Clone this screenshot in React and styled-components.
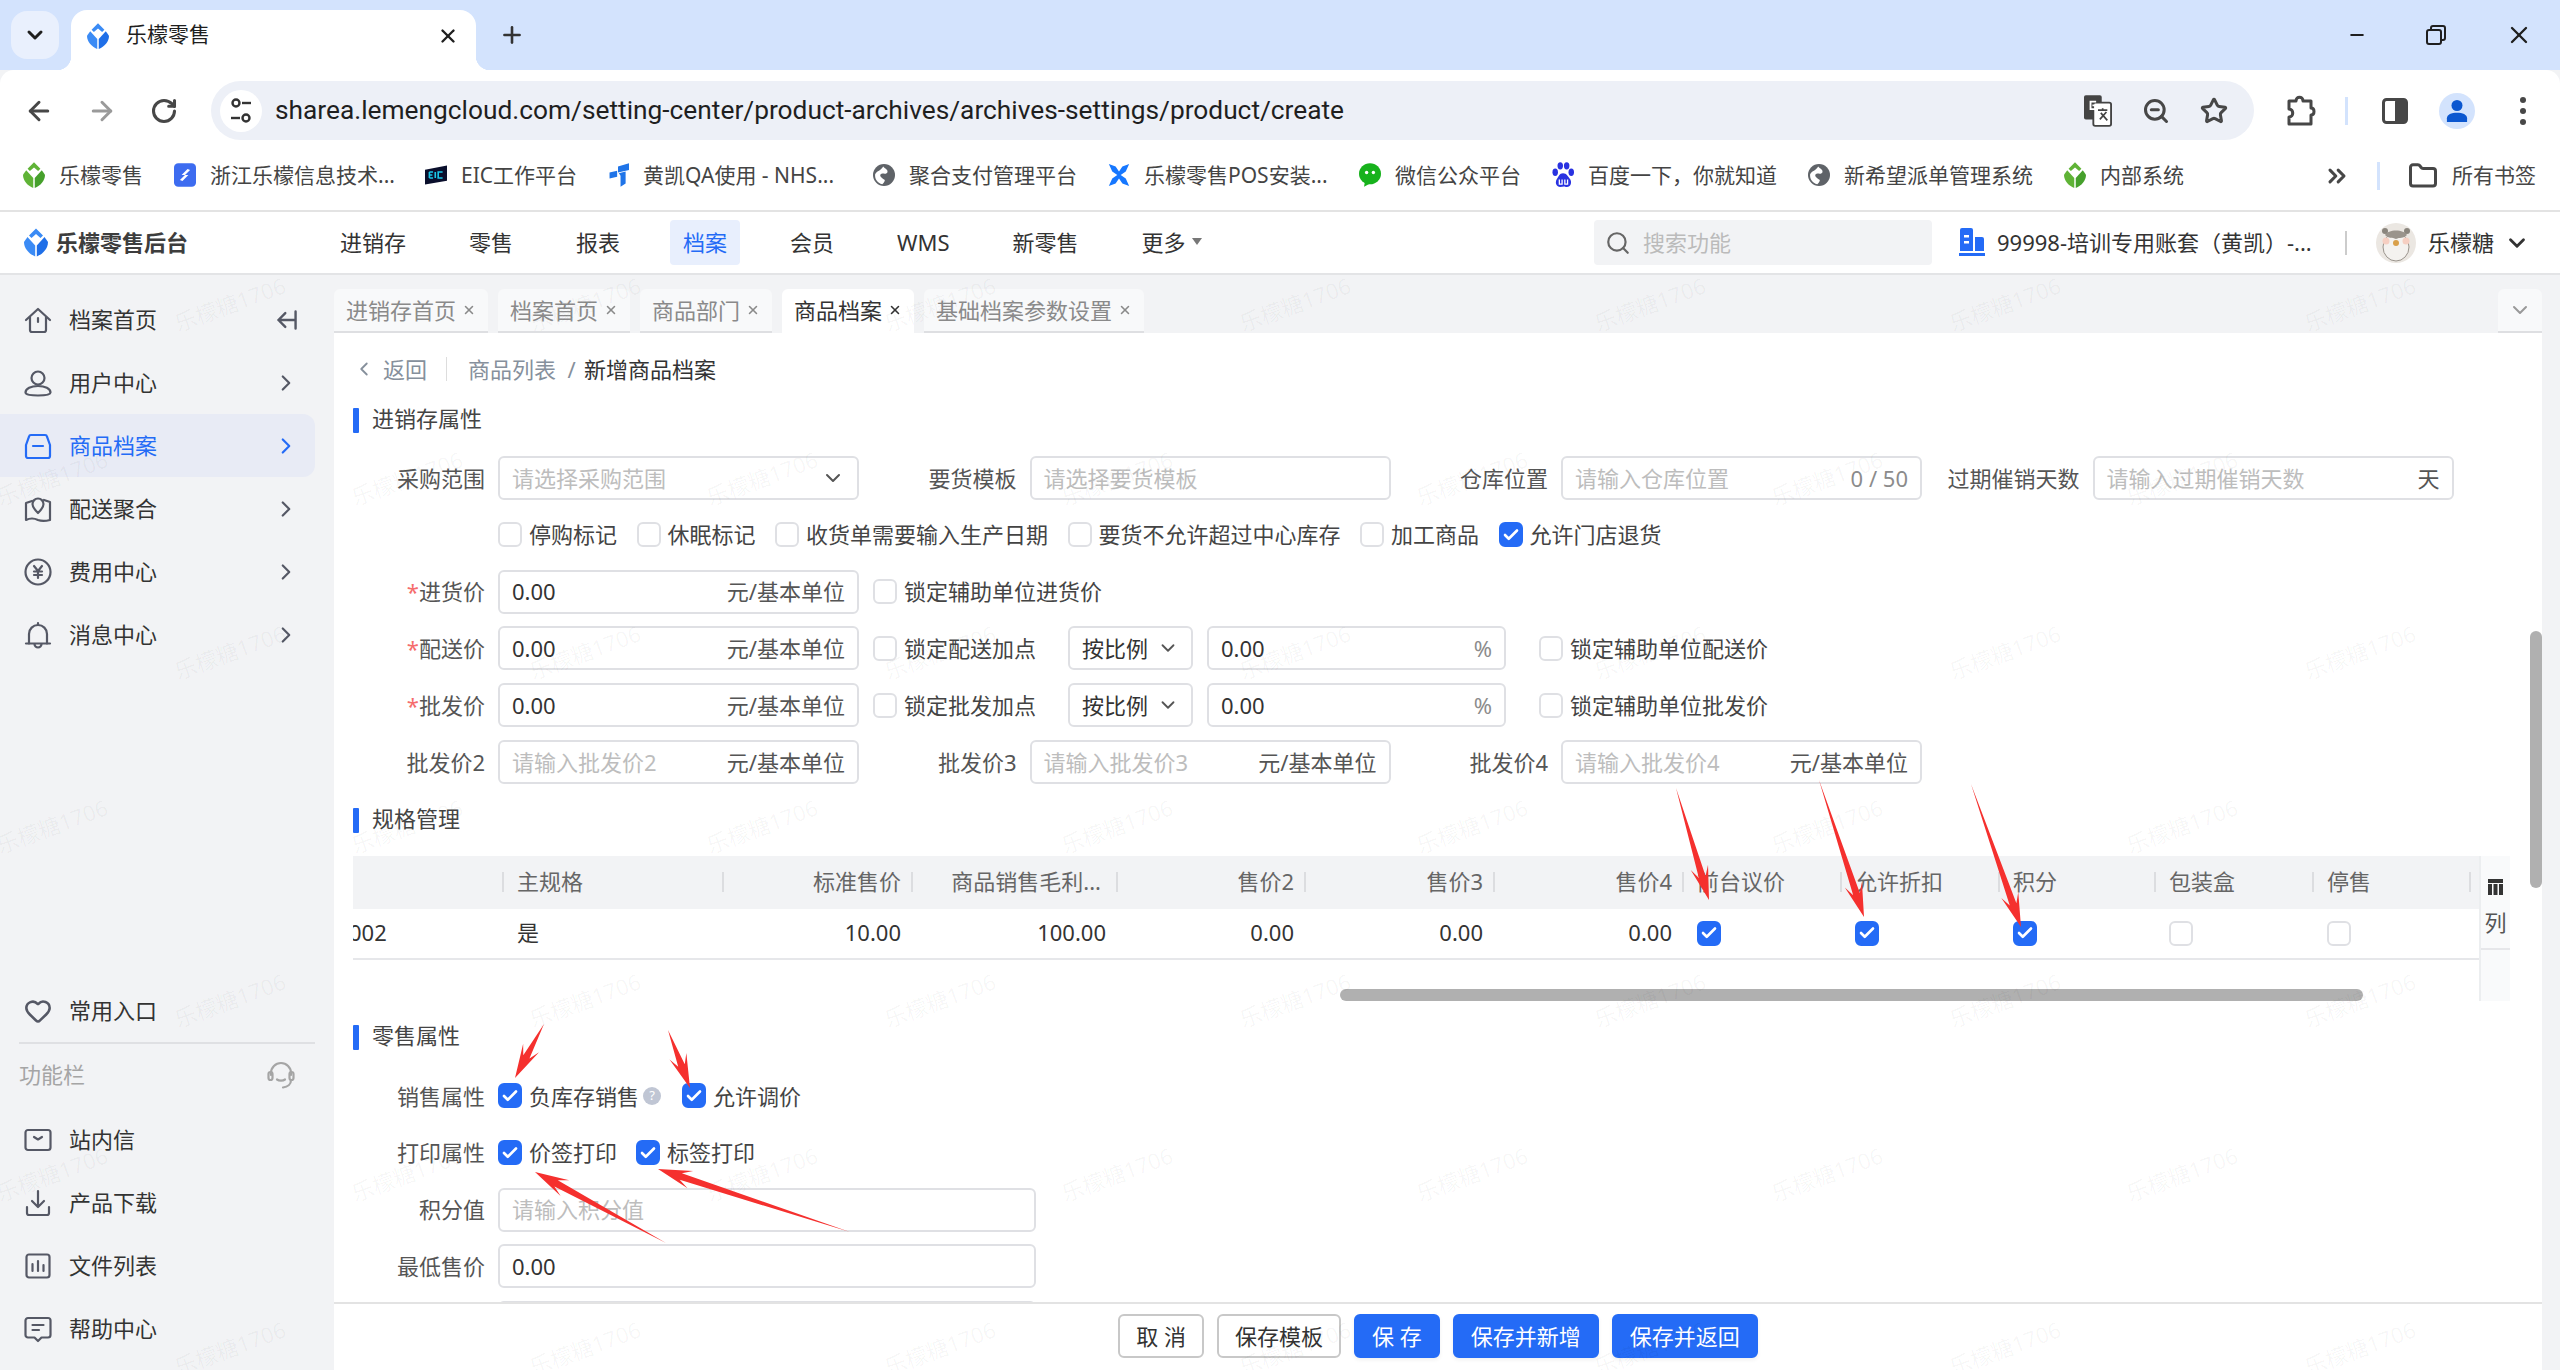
import styled, { createGlobalStyle } from 'styled-components'
import {
  ArrowLeft,
  ArrowRight,
  RotateCw,
  ZoomOut,
  Star,
  X,
  Plus,
  Minus,
  ChevronDown,
  ChevronLeft,
  ChevronRight,
  ChevronsRight,
  Search,
  Check,
  Heart,
  Folder,
} from 'lucide-react'

const blue = '#246bf6'
const border = '#dfe0e4'
const grey = '#f2f3f5'

const GlobalStyle = createGlobalStyle`
  html, body {
    margin: 0;
    padding: 0;
    background: #fff;
  }
  body {
    font-family: "Noto Sans", "Noto Sans CJK SC", sans-serif;
    font-size: 22px;
    line-height: 1.4;
    color: #333;
  }
  * {
    box-sizing: border-box;
  }
`

const Page = styled.div`
  position: relative;
  width: 2560px;
  height: 1370px;
  display: flex;
  flex-direction: column;
  overflow: hidden;
  background: ${grey};
`

/* ---------- browser chrome ---------- */

const TabStrip = styled.div`
  height: 70px;
  flex: none;
  display: flex;
  align-items: flex-end;
  padding-left: 11px;
  background: #d3e3fd;
`

const TabSearch = styled.div`
  width: 48px;
  height: 48px;
  margin-bottom: 11px;
  display: flex;
  align-items: center;
  justify-content: center;
  border-radius: 16px;
  background: #e9f0fd;
  color: #1f1f1f;
`

const BrowserTab = styled.div`
  position: relative;
  width: 405px;
  height: 60px;
  margin-left: 12px;
  padding: 0 17px 8px 16px;
  display: flex;
  align-items: center;
  border-radius: 16px 16px 0 0;
  background: #fff;
  font-family: "Roboto", "Noto Sans CJK SC", sans-serif;
  font-size: 21px;
  color: #1f1f1f;

  &::before,
  &::after {
    content: '';
    position: absolute;
    bottom: 0;
    width: 14px;
    height: 14px;
  }
  &::before {
    left: -14px;
    background: radial-gradient(circle at 0 0, transparent 14px, #fff 14.5px);
  }
  &::after {
    right: -14px;
    background: radial-gradient(circle at 100% 0, transparent 14px, #fff 14.5px);
  }

  span {
    margin-left: 17px;
    flex: 1;
  }
`

const NewTab = styled.div`
  margin: 0 0 22px 23px;
  display: flex;
  color: #333;
`

const WindowButtons = styled.div`
  margin: 0 27px 21px auto;
  display: flex;
  align-items: center;
  gap: 59px;
  color: #1f1f1f;
`

const Toolbar = styled.div`
  height: 71px;
  flex: none;
  display: flex;
  align-items: flex-start;
  padding: 11px 0 0 24px;
  border-radius: 14px 14px 0 0;
  background: #fff;
  color: #474747;
`

const ToolIcon = styled.div`
  width: ${(p) => p.$w || 63}px;
  height: 59px;
  flex: none;
  display: flex;
  align-items: center;
  color: ${(p) => p.$color || 'inherit'};
`

const Omnibox = styled.div`
  width: 2043px;
  height: 59px;
  margin-left: -2px;
  padding: 0 8px 0 9px;
  flex: none;
  display: flex;
  align-items: center;
  border-radius: 30px;
  background: #edf0f7;
`

const SiteInfo = styled.div`
  width: 42px;
  height: 42px;
  flex: none;
  display: flex;
  align-items: center;
  justify-content: center;
  border-radius: 50%;
  background: #fff;
`

const UrlText = styled.div`
  flex: 1;
  margin-left: 13px;
  font-family: "Roboto", sans-serif;
  font-size: 26.3px;
  color: #1f1f1f;
  white-space: nowrap;
`

const OmniIcons = styled.div`
  display: flex;
  align-items: center;
  gap: 30px;
  padding-right: 18px;
  color: #474747;
`

const ToolbarRight = styled.div`
  height: 59px;
  margin-left: 32px;
  display: flex;
  align-items: center;
`

const ChromeSep = styled.div`
  width: 3px;
  height: 28px;
  flex: none;
  background: #d3e3fd;
  margin: ${(p) => p.$m};
`

const ProfileBadge = styled.div`
  width: 36px;
  height: 36px;
  margin: 0 44px 0 31px;
  flex: none;
  display: flex;
  align-items: center;
  justify-content: center;
  border-radius: 50%;
  background: #d3e3fd;
`

const BookmarkBar = styled.div`
  height: 71px;
  flex: none;
  display: flex;
  align-items: center;
  padding: 0 23px;
  border-bottom: 2px solid #e3e3e3;
  background: #fff;
  font-size: 21px;
  color: #444;
`

const Bookmark = styled.div`
  margin-right: 30px;
  flex: none;
  display: flex;
  align-items: center;
  gap: 14px;
`

const BookmarkIcon = styled.span`
  width: 22px;
  flex: none;
  display: flex;
  justify-content: center;
`

const BookmarkText = styled.span`
  width: ${(p) => p.$w}px;
  margin-left: ${(p) => p.$ml || 0}px;
  white-space: nowrap;
`

const BookmarkEnd = styled.div`
  margin-left: auto;
  display: flex;
  align-items: center;
  color: #474747;
`

/* ---------- app header ---------- */

const AppHeader = styled.header`
  height: 63px;
  flex: none;
  display: flex;
  align-items: center;
  padding: 0 30px 0 24px;
  border-bottom: 2px solid #e3e4e6;
  background: #fff;
`

const Brand = styled.div`
  width: 303px;
  flex: none;
  display: flex;
  align-items: center;
  gap: 8px;
  font-weight: 700;
  color: #3d3d3d;
  white-space: nowrap;
`

const Nav = styled.nav`
  display: flex;
  align-items: center;
  gap: 37px;
`

const NavItem = styled.div`
  height: 45px;
  padding: 0 13px;
  display: flex;
  align-items: center;
  gap: 6px;
  border-radius: 4px;
  background: ${(p) => (p.$active ? '#e8effd' : 'transparent')};
  color: ${(p) => (p.$active ? blue : '#333')};
  white-space: nowrap;
`

const Caret = styled.i`
  width: 0;
  height: 0;
  margin-top: -3px;
  border-left: 5px solid transparent;
  border-right: 5px solid transparent;
  border-top: 7px solid #777;
`

const HeaderRight = styled.div`
  margin-left: auto;
  display: flex;
  align-items: center;
`

const SearchBox = styled.div`
  width: 338px;
  height: 45px;
  padding-left: 11px;
  display: flex;
  align-items: center;
  gap: 12px;
  border-radius: 4px;
  background: ${grey};
  color: #bbb;
  svg {
    color: #666;
  }
`

const Account = styled.div`
  width: 352px;
  margin-left: 26px;
  display: flex;
  align-items: center;
  gap: 11px;
  white-space: nowrap;
  svg {
    flex: none;
  }
`

const HeaderSep = styled.div`
  width: 2px;
  height: 24px;
  margin: 0 29px 0 35px;
  background: #ccc;
`

const UserName = styled.div`
  margin-left: 12px;
  margin-right: 10px;
`

/* ---------- main area ---------- */

const Main = styled.div`
  flex: 1;
  min-height: 0;
  display: flex;
`

const Sidebar = styled.aside`
  width: 334px;
  flex: none;
  display: flex;
  flex-direction: column;
  justify-content: space-between;
  padding: 13px 19px 10px 0;
  background: ${grey};
`

const MenuItem = styled.div`
  height: 63px;
  padding: 0 24px;
  display: flex;
  align-items: center;
  gap: 17px;
  border-radius: 0 12px 12px 0;
  background: ${(p) => (p.$active ? '#e8ebf5' : 'transparent')};
  color: ${(p) => (p.$active ? blue : '#333')};

  svg:first-child {
    color: ${(p) => (p.$active ? blue : '#555865')};
    flex: none;
  }
`

const MenuText = styled.span`
  flex: 1;
`

const MenuArrow = styled.span`
  display: flex;
  margin-right: -8px;
  color: ${(p) => (p.$active ? blue : '#6b6b6b')};
`

const SideDivider = styled.div`
  height: 2px;
  margin: 0 0 0 19px;
  background: #dfe0e3;
`

const SideHeading = styled.div`
  height: 64px;
  padding: 0 20px 3px 19px;
  display: flex;
  align-items: center;
  justify-content: space-between;
  color: #a5a5a5;
`

const Workspace = styled.div`
  flex: 1;
  min-width: 0;
  display: flex;
  flex-direction: column;
`

const TabsRow = styled.div`
  height: 58px;
  flex: none;
  display: flex;
  gap: 10px;
  padding: 14px 18px 0 0;
`

const PageTab = styled.div`
  height: 44px;
  padding: 0 12px;
  display: flex;
  align-items: center;
  gap: 6px;
  border-radius: 6px 6px 0 0;
  border-bottom: 2px solid ${(p) => (p.$active ? '#fff' : '#dedfe2')};
  background: ${(p) => (p.$active ? '#fff' : '#f8f9fa')};
  color: ${(p) => (p.$active ? '#333' : '#8a8a8a')};
  white-space: nowrap;
`

const TabsCollapse = styled.div`
  width: 44px;
  height: 44px;
  margin-left: auto;
  display: flex;
  align-items: center;
  justify-content: center;
  border-radius: 6px 6px 0 0;
  border-bottom: 2px solid #dedfe2;
  background: #f8f9fa;
  color: #999;
`

const Body = styled.div`
  flex: 1;
  min-height: 0;
  display: flex;
`

const PaneColumn = styled.div`
  flex: 1;
  min-width: 0;
  display: flex;
  flex-direction: column;
`

const Gutter = styled.div`
  width: 18px;
  flex: none;
  background: ${grey};
`

const FormPane = styled.div`
  position: relative;
  flex: 1;
  min-height: 0;
  padding: 24px 0 0 19px;
  overflow: hidden;
  background: #fff;
`

const ScrollThumb = styled.div`
  position: absolute;
  top: 298px;
  right: 0;
  width: 12px;
  height: 257px;
  border-radius: 6px;
  background: #b0b0b0;
`

const Crumbs = styled.div`
  height: 24px;
  display: flex;
  align-items: center;
  color: #86909c;
  white-space: nowrap;
`

const BackText = styled.span`
  margin-left: 8px;
`

const CrumbSep = styled.i`
  width: 1px;
  height: 24px;
  margin: 0 21px 0 19px;
  background: #ddd;
`

const CrumbCurrent = styled.span`
  margin-left: -3px;
  color: #333;
`

const SectionTitle = styled.div`
  height: 25px;
  margin: ${(p) => p.$m};
  padding-bottom: 4px;
  display: flex;
  align-items: center;
  gap: 13px;
  color: #444;

  &::before {
    content: '';
    width: 6px;
    height: 25px;
    margin-bottom: -4px;
    background: ${blue};
    border-radius: 1px;
  }
`

const FormGroup = styled.div`
  display: flex;
  flex-direction: column;
  gap: 12.8px;
`

const Row = styled.div`
  height: 44px;
  display: flex;
  align-items: center;
  padding-left: ${(p) => p.$pl || 0}px;
  gap: ${(p) => p.$gap || 0}px;
`

const Field = styled.div`
  width: ${(p) => p.$cell || 531.5}px;
  flex: none;
  display: grid;
  grid-template-columns: 132px ${(p) => p.$w || 361}px;
  column-gap: 13px;
  align-items: center;
`

const FieldLabel = styled.label`
  text-align: right;
  color: #555;
  white-space: nowrap;

  em {
    font-style: normal;
    color: #f56c6c;
  }
`

const RowLabel = styled(FieldLabel)`
  width: 132px;
  margin-right: 13px;
  flex: none;
`

const InputBox = styled.div`
  width: ${(p) => (p.$w ? `${p.$w}px` : 'auto')};
  height: 44px;
  margin-left: ${(p) => p.$ml || 0}px;
  padding: 0 12px;
  flex: none;
  display: flex;
  align-items: center;
  justify-content: space-between;
  border: 2px solid ${border};
  border-radius: 6px;
  background: #fff;
  white-space: nowrap;
`

const Placeholder = styled.span`
  color: #bdbdbd;
`

const Unit = styled.span`
  color: ${(p) => (p.$muted ? '#8c8c8c' : '#555')};
`

const CheckItem = styled.div`
  margin-left: ${(p) => p.$ml || 0}px;
  display: flex;
  align-items: center;
  gap: 7px;
  color: #444;
  white-space: nowrap;
`

const Box = styled.span`
  width: 24px;
  height: 25px;
  flex: none;
  display: flex;
  align-items: center;
  justify-content: center;
  border: 2px solid ${(p) => (p.$on ? blue : border)};
  border-radius: 6px;
  background: ${(p) => (p.$on ? blue : '#fff')};
  color: #fff;
`

const HelpDot = styled.span`
  width: 18px;
  height: 18px;
  margin-left: 4px;
  display: flex;
  align-items: center;
  justify-content: center;
  border-radius: 50%;
  background: #c0c6d4;
  color: #fff;
  font-size: 13px;
  line-height: 1;
`

/* ---------- spec table ---------- */

const columns = '151px 220px 189px 205px 188px 189px 189px 158px 158px 156px 158px 157px 8px'

const TableWrap = styled.div`
  margin-top: 23px;
  display: flex;
`

const TableCol = styled.div`
  width: 2126px;
  flex: none;
`

const HeadRow = styled.div`
  height: 53px;
  display: grid;
  grid-template-columns: ${columns};
  align-items: center;
  background: ${grey};
  color: #666;
`

const HeadCell = styled.div`
  position: relative;
  height: 100%;
  display: flex;
  align-items: center;
  justify-content: ${(p) => (p.$right ? 'flex-end' : 'flex-start')};
  padding: ${(p) => (p.$right ? `0 ${p.$pr || 12}px 3px 0` : '0 0 3px 13px')};
  white-space: nowrap;

  &::after {
    content: '';
    position: absolute;
    right: 0;
    top: 16px;
    width: 2px;
    height: 20px;
    background: #dcdde0;
  }
`

const DataRow = styled.div`
  height: 51px;
  display: grid;
  grid-template-columns: ${columns};
  align-items: center;
  border-bottom: 2px solid #e6e7ea;
  color: #333;
`

const DataCell = styled.div`
  display: flex;
  overflow: hidden;
  justify-content: ${(p) => (p.$right ? 'flex-end' : 'flex-start')};
  padding: ${(p) => (p.$right ? '0 12px 3px 0' : `0 0 ${p.$box ? 0 : 3}px 13px`)};
  white-space: nowrap;
`

const ClippedCode = styled.span`
  margin-left: -17px;
`

const HScrollThumb = styled.div`
  width: 1023px;
  height: 12px;
  margin: 29px 0 0 987px;
  border-radius: 6px;
  background: #b0b0b0;
`

const ColumnToggle = styled.div`
  width: 31px;
  height: 145px;
  flex: none;
  display: flex;
  flex-direction: column;
  align-items: center;
  padding-top: 23px;
  background: #f9fafb;
  border-left: 2px solid #eceef0;
  color: #555;
`

const ColumnLabel = styled.div`
  width: 100%;
  margin-top: 12px;
  padding-bottom: 10px;
  text-align: center;
  border-bottom: 2px solid #e6e7ea;
`

/* ---------- footer ---------- */

const Footer = styled.footer`
  height: 68px;
  flex: none;
  display: flex;
  align-items: center;
  justify-content: center;
  gap: 13px;
  padding-bottom: 2px;
  border-top: 2px solid #e3e3e3;
  background: #fff;
`

const Button = styled.button`
  height: 44px;
  padding: 0 16px;
  border-radius: 6px;
  border: 2px solid ${(p) => (p.$primary ? blue : '#c8c8c8')};
  background: ${(p) => (p.$primary ? blue : '#fff')};
  color: ${(p) => (p.$primary ? '#fff' : '#333')};
  font: inherit;
  white-space: nowrap;
  box-shadow: ${(p) => (p.$primary ? '0 2px 4px rgba(0,0,0,0.06)' : 'none')};
`

/* ---------- overlays ---------- */

const WatermarkLayer = styled.div`
  position: absolute;
  left: 0;
  right: 0;
  top: 212px;
  bottom: 0;
  overflow: hidden;
  pointer-events: none;
`

const Watermark = styled.span`
  position: absolute;
  transform: translate(-50%, -50%) rotate(-20deg);
  font-size: 22px;
  color: rgba(0, 0, 0, 0.04);
  white-space: nowrap;
`

const ArrowLayer = styled.svg`
  position: absolute;
  left: 0;
  top: 0;
  pointer-events: none;
`

/* ---------- drawings ---------- */

function Lemeng({ size = 24, a, b }) {
  return (
    <svg width={size} height={size * 1.2} viewBox="0 0 24 28">
      <path d="M12 0 L19 7 L16.5 9.5 L12 5.5 L7.5 9.5 L5 7 Z" fill={a} />
      <path d="M3.5 8.5 L11.2 17 V28 C5 25.5 0 20 0 13.5 Z" fill={a} />
      <path d="M20.5 8.5 L12.8 17 V28 C19 25.5 24 20 24 13.5 Z" fill={b} />
    </svg>
  )
}

function Ico({ size = 28, children, ...rest }) {
  return (
    <svg
      width={size}
      height={size}
      viewBox="0 0 28 28"
      fill="none"
      stroke="currentColor"
      strokeWidth="2.2"
      strokeLinecap="round"
      strokeLinejoin="round"
      {...rest}
    >
      {children}
    </svg>
  )
}

const HomeIcon = () => (
  <Ico>
    <path d="M2 14 L14 3 L26 14" />
    <path d="M6 11 V24 a2 2 0 0 0 2 2 H20 a2 2 0 0 0 2 -2 V11" />
    <path d="M14 12 V16" />
  </Ico>
)
const UserIcon = () => (
  <Ico>
    <circle cx="14" cy="9" r="6.5" />
    <path d="M1.5 23.5 C1.5 19.5 7 17 14 17 S26.5 19.5 26.5 23.5 C26.5 25.5 21 26.5 14 26.5 S1.5 25.5 1.5 23.5 Z" />
  </Ico>
)
const ArchiveIcon = () => (
  <Ico>
    <path d="M7 3 H21 a2 2 0 0 1 2 1.6 L26 13 V24 a2 2 0 0 1 -2 2 H4 a2 2 0 0 1 -2 -2 V13 L5 4.6 A2 2 0 0 1 7 3 Z" />
    <path d="M9 14 H19" />
  </Ico>
)
const MapIcon = () => (
  <Ico>
    <path d="M8 6 L2 8 V25 C6 23 10 23 14 25 C18 26.5 22 26 26 25 V7 L20 5" />
    <path d="M14 18 C11 15 8.5 12.5 8.5 9 A5.5 5.5 0 0 1 19.5 9 C19.5 12.5 17 15 14 18 Z" />
  </Ico>
)
const YenIcon = () => (
  <Ico>
    <circle cx="14" cy="14" r="12.5" />
    <path d="M10 8 L14 13 L18 8 M14 13 V20 M10 13.5 H18 M10 17 H18" />
  </Ico>
)
const BellIcon = () => (
  <Ico>
    <path d="M2 22.5 H26" />
    <path d="M5 22.5 V13 a9 9 0 0 1 18 0 V22.5" />
    <path d="M14 2 V4 M10.5 23 a3.5 3.5 0 0 0 7 0" />
  </Ico>
)
const MailIcon = () => (
  <Ico>
    <rect x="1.5" y="4" width="25" height="20" rx="2.5" />
    <path d="M10 11 L14 13.5 L18 11" />
  </Ico>
)
const DownloadIcon = () => (
  <Ico>
    <path d="M14 2 V17 M8 12 L14 18 L20 12" />
    <path d="M3 18 V24 a2 2 0 0 0 2 2 H23 a2 2 0 0 0 2 -2 V18" />
  </Ico>
)
const ChartIcon = () => (
  <Ico>
    <rect x="2.5" y="2.5" width="23" height="23" rx="2.5" />
    <path d="M8.5 12 V19 M14 9 V19 M19.5 13 V19" />
  </Ico>
)
const MessageIcon = () => (
  <Ico>
    <path d="M4 3 H24 a2.5 2.5 0 0 1 2.5 2.5 V20 a2.5 2.5 0 0 1 -2.5 2.5 H17.5 L14 26 L10.5 22.5 H4 A2.5 2.5 0 0 1 1.5 20 V5.5 A2.5 2.5 0 0 1 4 3 Z" />
    <path d="M8.5 10 H19.5 M8.5 15 H15" />
  </Ico>
)
const HeadsetIcon = () => (
  <Ico>
    <path d="M4 14 V12 a10 10 0 0 1 20 0 V14" />
    <rect x="1.5" y="11" width="4" height="8" rx="2" />
    <rect x="22.5" y="11" width="4" height="8" rx="2" />
    <path d="M24 19 C24 23 21 26 16 26.5 M10 18.5 C12 20 16 20 18 18.5" />
  </Ico>
)
const FoldIcon = () => (
  <Ico size={24} strokeWidth="2.8">
    <path d="M24 4 V24 M23 14 H4 M12 6 L4 14 L12 22" />
  </Ico>
)
const SliderIcon = () => (
  <svg width="24" height="28" viewBox="0 0 24 28" fill="none" stroke="#333" strokeWidth="2.4">
    <circle cx="7" cy="6" r="3.5" />
    <path d="M13 6 H22" />
    <circle cx="17" cy="21" r="3.5" />
    <path d="M2 21 H11" />
  </svg>
)
const TranslateIcon = () => (
  <svg width="28" height="34" viewBox="0 0 30 34">
    <rect x="0" y="0" width="19" height="26" rx="2" fill="#444" />
    <rect x="10" y="8" width="19" height="25" rx="2" fill="#fff" stroke="#444" strokeWidth="2" />
    <path d="M15 16 H25 M20 14 V16 M17 26 L24 18 M18 19 L25 27" stroke="#444" strokeWidth="1.8" fill="none" />
    <path d="M13 7 H7 V15 H12 V11 H9" fill="none" stroke="#fff" strokeWidth="2" />
  </svg>
)
const PuzzleIcon = () => (
  <svg width="30" height="32" viewBox="0 0 30 32" fill="none" stroke="#474747" strokeWidth="3" strokeLinejoin="round">
    <path d="M3 6 H10 C10 1 17 1 17 6 H25 V13 C29 13 29 20 25 20 V29 H3 V22 C8 22 8 14 3 14 Z" />
  </svg>
)
const SidePanelIcon = () => (
  <svg width="26" height="26" viewBox="0 0 26 26">
    <rect x="1.5" y="1.5" width="23" height="23" rx="3" fill="none" stroke="#474747" strokeWidth="3" />
    <rect x="13" y="1.5" width="11.5" height="23" rx="2" fill="#474747" />
  </svg>
)
const PersonIcon = () => (
  <svg width="22" height="24" viewBox="0 0 24 26" fill="#0b57d0">
    <circle cx="12" cy="7" r="6" />
    <path d="M1 25 V21 C1 17 6 15 12 15 S23 17 23 21 V25 Z" />
  </svg>
)
const DotsIcon = () => (
  <svg width="8" height="30" viewBox="0 0 8 30" fill="#474747">
    <circle cx="4" cy="4" r="3" />
    <circle cx="4" cy="15" r="3" />
    <circle cx="4" cy="26" r="3" />
  </svg>
)
const RestoreIcon = () => (
  <svg width="20" height="20" viewBox="0 0 20 20" fill="none" stroke="#1f1f1f" strokeWidth="2">
    <rect x="1" y="5" width="14" height="14" rx="2" />
    <path d="M5 5 V3 a2 2 0 0 1 2 -2 H17 a2 2 0 0 1 2 2 V13 a2 2 0 0 1 -2 2 H15" />
  </svg>
)
const AccountIcon = () => (
  <svg width="28" height="28" viewBox="0 0 28 28" fill={blue}>
    <path d="M2 2 a2 2 0 0 1 2 -2 H13 a2 2 0 0 1 2 2 V23 H2 Z" />
    <path d="M17 9 H24 a2 2 0 0 1 2 2 V23 H17 Z" />
    <rect x="1" y="25" width="26" height="3" />
    <rect x="6" y="7" width="5" height="2.5" fill="#fff" />
    <rect x="6" y="13" width="5" height="2.5" fill="#fff" />
  </svg>
)
const Avatar = () => (
  <svg width="40" height="40" viewBox="0 0 40 40">
    <circle cx="20" cy="20" r="20" fill="#ebe7e2" />
    <ellipse cx="20" cy="24" rx="13" ry="14" fill="#f4f2ef" stroke="#9a948c" strokeWidth="1" />
    <path d="M9 12 C12 6 28 6 31 12 C27 16 24 14 20 16 C16 14 13 16 9 12 Z" fill="#9a948c" />
    <circle cx="9" cy="8" r="3" fill="#8a857d" />
    <circle cx="31" cy="8" r="3" fill="#8a857d" />
    <circle cx="10" cy="18" r="3.5" fill="#f6cfc2" />
    <circle cx="30" cy="18" r="3.5" fill="#f6cfc2" />
    <circle cx="20" cy="20" r="3" fill="#d9a04a" />
  </svg>
)
const TableIcon = () => (
  <svg width="15" height="16" viewBox="0 0 15 16" fill="#333">
    <rect x="0" y="0" width="15" height="4" />
    <rect x="0" y="5" width="4" height="11" />
    <rect x="5.5" y="5" width="4" height="11" />
    <rect x="11" y="5" width="4" height="11" />
  </svg>
)

const ZheLogo = () => (
  <svg width="27" height="28" viewBox="0 0 26 28">
    <rect width="26" height="28" rx="5" fill="#3d6cf0" />
    <path d="M16 7 L9 14 L13 14 L19 8 Z M10 21 L17 14 L13 14 L7 20 Z" fill="#fff" />
  </svg>
)
const EicLogo = () => (
  <svg width="30" height="26" viewBox="0 0 30 26">
    <path d="M0 6 L30 0 V21 L0 26 Z" fill="#0a0f2c" />
    <path d="M6 9 H11 M6 13 H10 M6 17 H11 M6 9 V17 M14 9 V17 M24 9 H18 V17 H24" stroke="#19c8e8" strokeWidth="2.2" fill="none" />
  </svg>
)
const QaLogo = () => (
  <svg width="26" height="28" viewBox="0 0 26 28" fill="#1f74e8">
    <path d="M13 4 L26 0 V8 L13 11 Z" />
    <path d="M3 11 L12 9 V16 L3 18 Z" />
    <path d="M14 12 L22 10 V24 L16 28 V15 Z" />
  </svg>
)
const GlobeLogo = () => (
  <svg width="26" height="26" viewBox="0 0 26 26">
    <circle cx="13" cy="13" r="13" fill="#5f6368" />
    <path d="M12 3 C15 6 18 7 17 10 C15 13 11 10 9 12 C7 15 12 17 14 19 C14 21 12 23 11 24 C5 22 2 18 2.5 12 C5 8 9 8 12 3 Z" fill="#fff" />
  </svg>
)
const XLogo = () => (
  <svg width="26" height="28" viewBox="0 0 26 28" fill="#1677ff">
    <path d="M1 1 L9 4 L13 10 L17 4 L25 1 L21 10 L15 14 L21 18 L25 27 L17 24 L13 18 L9 24 L1 27 L5 18 L11 14 L5 10 Z" />
  </svg>
)
const WechatLogo = () => (
  <svg width="26" height="28" viewBox="0 0 26 28">
    <ellipse cx="13" cy="12.5" rx="13" ry="12.5" fill="#17b21c" />
    <path d="M7 21 L6 28 L13 24 Z" fill="#17b21c" />
    <circle cx="9" cy="11" r="2" fill="#fff" />
    <circle cx="17" cy="11" r="2" fill="#fff" />
  </svg>
)
const BaiduLogo = () => (
  <svg width="24" height="28" viewBox="0 0 24 28" fill="#2932e1">
    <ellipse cx="3.5" cy="11" rx="3" ry="4" />
    <ellipse cx="9" cy="4" rx="3" ry="4" />
    <ellipse cx="16" cy="4" rx="3" ry="4" />
    <ellipse cx="21" cy="11" rx="3" ry="4" />
    <path d="M12 12 C8 12 7 16 5 19 C3 23 5 27 9 27 C11 27 13 26 15 27 C20 28 22 23 20 19 C18 16 16 12 12 12 Z" />
    <path d="M8 19 V24 H11 V19 M14 19 V24 H17 V19" stroke="#fff" strokeWidth="1.4" fill="none" />
  </svg>
)

/* ---------- data ---------- */

const bookmarks = [
  { icon: <Lemeng size={22} a="#5fb336" b="#46a02c" />, label: '乐檬零售', w: 85 },
  { icon: <ZheLogo />, label: '浙江乐檬信息技术...', w: 185 },
  { icon: <EicLogo />, label: 'EIC工作平台', w: 116 },
  { icon: <QaLogo />, label: '黄凯QA使用 - NHS...', w: 200 },
  { icon: <GlobeLogo />, label: '聚合支付管理平台', w: 169 },
  { icon: <XLogo />, label: '乐檬零售POS安装...', w: 185 },
  { icon: <WechatLogo />, label: '微信公众平台', w: 127 },
  { icon: <BaiduLogo />, label: '百度一下，你就知道', w: 190 },
  { icon: <GlobeLogo />, label: '新希望派单管理系统', w: 190 },
  { icon: <Lemeng size={22} a="#5fb336" b="#46a02c" />, label: '内部系统', w: 85 },
]

const navItems = ['进销存', '零售', '报表', '档案', '会员', 'WMS', '新零售']

const topMenu = [
  { icon: <HomeIcon />, label: '档案首页', fold: true },
  { icon: <UserIcon />, label: '用户中心' },
  { icon: <ArchiveIcon />, label: '商品档案', active: true },
  { icon: <MapIcon />, label: '配送聚合' },
  { icon: <YenIcon />, label: '费用中心' },
  { icon: <BellIcon />, label: '消息中心' },
]

const bottomMenu = [
  { icon: <MailIcon />, label: '站内信' },
  { icon: <DownloadIcon />, label: '产品下载' },
  { icon: <ChartIcon />, label: '文件列表' },
  { icon: <MessageIcon />, label: '帮助中心' },
]

const pageTabs = ['进销存首页', '档案首页', '商品部门', '商品档案', '基础档案参数设置']

const flagChecks = [
  { label: '停购标记' },
  { label: '休眠标记' },
  { label: '收货单需要输入生产日期' },
  { label: '要货不允许超过中心库存' },
  { label: '加工商品' },
  { label: '允许门店退货', on: true },
]

const head = [
  { label: '' },
  { label: '主规格' },
  { label: '标准售价', right: true },
  { label: '商品销售毛利...', right: true, pr: 17 },
  { label: '售价2', right: true },
  { label: '售价3', right: true },
  { label: '售价4', right: true },
  { label: '前台议价' },
  { label: '允许折扣' },
  { label: '积分' },
  { label: '包装盒' },
  { label: '停售' },
]

const prices = ['10.00', '100.00', '0.00', '0.00', '0.00']
const rowChecks = [true, true, true, false, false]

const arrows = [
  [1676, 788, 1709, 900],
  [1819, 780, 1864, 917],
  [1971, 784, 2021, 927],
  [544, 1024, 515, 1078],
  [668, 1030, 690, 1088],
  [666, 1243, 535, 1172],
  [850, 1232, 658, 1169],
]

// thin tail that widens up to the head, like a screenshot tool's arrow
function arrowPoints([x1, y1, x2, y2]) {
  const len = Math.hypot(x2 - x1, y2 - y1)
  const ux = (x2 - x1) / len
  const uy = (y2 - y1) / len
  const nx = -uy
  const ny = ux
  const at = (back, side) => `${x2 - ux * back + nx * side},${y2 - uy * back + ny * side}`
  return [`${x1},${y1}`, at(24, 3.5), at(34, 9), `${x2},${y2}`, at(34, -9), at(24, -3.5)].join(' ')
}

const marks = []
for (let row = 0; row < 8; row++) {
  for (let col = 0; col < 8; col++) {
    const left = (row % 2 === 0 ? 230 : 52) + col * 355
    if (left < 2500) marks.push({ left, top: 304 + row * 174 - 212 })
  }
}

/* ---------- page ---------- */

function CheckLabel({ on, children, ml }) {
  return (
    <CheckItem $ml={ml}>
      <Box $on={on}>{on && <Check size={18} strokeWidth={3.5} />}</Box>
      <span>{children}</span>
    </CheckItem>
  )
}

function PriceInput({ label, required, placeholder, value = '', unit = '元/基本单位', w }) {
  return (
    <Field $w={w}>
      <FieldLabel>
        {required && <em>*</em>}
        {label}
      </FieldLabel>
      <InputBox>
        {placeholder ? <Placeholder>{placeholder}</Placeholder> : <span>{value}</span>}
        {unit && <Unit>{unit}</Unit>}
      </InputBox>
    </Field>
  )
}

function SelectRatio() {
  return (
    <InputBox $w={125} $ml={32}>
      <span>按比例</span>
      <ChevronDown size={22} color="#555" />
    </InputBox>
  )
}

function MenuRow({ item }) {
  return (
    <MenuItem $active={item.active}>
      {item.icon}
      <MenuText>{item.label}</MenuText>
      {item.fold ? (
        <MenuArrow>
          <FoldIcon />
        </MenuArrow>
      ) : (
        item.arrow !== false && (
          <MenuArrow $active={item.active}>
            <ChevronRight size={26} strokeWidth={2} />
          </MenuArrow>
        )
      )}
    </MenuItem>
  )
}

export default function App() {
  return (
    <Page>
      <GlobalStyle />

      <TabStrip>
        <TabSearch>
          <ChevronDown size={24} strokeWidth={3} />
        </TabSearch>
        <BrowserTab>
          <Lemeng size={22} a="#3b8bf5" b="#1f6fe8" />
          <span>乐檬零售</span>
          <X size={22} strokeWidth={2.6} />
        </BrowserTab>
        <NewTab>
          <Plus size={26} strokeWidth={2.4} />
        </NewTab>
        <WindowButtons>
          <Minus size={20} strokeWidth={2.4} />
          <RestoreIcon />
          <X size={28} strokeWidth={2} />
        </WindowButtons>
      </TabStrip>

      <Toolbar>
        <ToolIcon>
          <ArrowLeft size={30} strokeWidth={2.4} />
        </ToolIcon>
        <ToolIcon $color="#9a9a9a">
          <ArrowRight size={30} strokeWidth={2.4} />
        </ToolIcon>
        <ToolIcon>
          <RotateCw size={28} strokeWidth={2.6} />
        </ToolIcon>
        <Omnibox>
          <SiteInfo>
            <SliderIcon />
          </SiteInfo>
          <UrlText>sharea.lemengcloud.com/setting-center/product-archives/archives-settings/product/create</UrlText>
          <OmniIcons>
            <TranslateIcon />
            <ZoomOut size={28} strokeWidth={2.6} />
            <Star size={28} strokeWidth={2.6} />
          </OmniIcons>
        </Omnibox>
        <ToolbarRight>
          <PuzzleIcon />
          <ChromeSep $m="0 34px 0 29px" />
          <SidePanelIcon />
          <ProfileBadge>
            <PersonIcon />
          </ProfileBadge>
          <DotsIcon />
        </ToolbarRight>
      </Toolbar>

      <BookmarkBar>
        {bookmarks.map((b) => (
          <Bookmark key={b.label}>
            <BookmarkIcon>{b.icon}</BookmarkIcon>
            <BookmarkText $w={b.w}>{b.label}</BookmarkText>
          </Bookmark>
        ))}
        <BookmarkEnd>
          <ChevronsRight size={28} strokeWidth={2.6} />
          <ChromeSep $m="0 28px 0 26px" />
          <Folder size={30} strokeWidth={2.4} />
          <BookmarkText $w={85} $ml={14}>
            所有书签
          </BookmarkText>
        </BookmarkEnd>
      </BookmarkBar>

      <AppHeader>
        <Brand>
          <Lemeng size={24} a="#3b8bf5" b="#1f6fe8" />
          乐檬零售后台
        </Brand>
        <Nav>
          {navItems.map((n) => (
            <NavItem key={n} $active={n === '档案'}>
              {n}
            </NavItem>
          ))}
          <NavItem>
            更多
            <Caret />
          </NavItem>
        </Nav>
        <HeaderRight>
          <SearchBox>
            <Search size={26} strokeWidth={2} />
            搜索功能
          </SearchBox>
          <Account>
            <AccountIcon />
            99998-培训专用账套（黄凯）-...
          </Account>
          <HeaderSep />
          <Avatar />
          <UserName>乐檬糖</UserName>
          <ChevronDown size={26} strokeWidth={2.6} />
        </HeaderRight>
      </AppHeader>

      <Main>
        <Sidebar>
          <div>
            {topMenu.map((item) => (
              <MenuRow key={item.label} item={item} />
            ))}
          </div>
          <div>
            <MenuItem>
              <Heart size={28} strokeWidth={2.2} />
              <MenuText>常用入口</MenuText>
            </MenuItem>
            <SideDivider />
            <SideHeading>
              功能栏
              <HeadsetIcon />
            </SideHeading>
            {bottomMenu.map((item) => (
              <MenuRow key={item.label} item={{ ...item, arrow: false }} />
            ))}
          </div>
        </Sidebar>

        <Workspace>
          <TabsRow>
            {pageTabs.map((t) => (
              <PageTab key={t} $active={t === '商品档案'}>
                {t}
                <X size={14} strokeWidth={2.6} />
              </PageTab>
            ))}
            <TabsCollapse>
              <ChevronDown size={24} strokeWidth={2} />
            </TabsCollapse>
          </TabsRow>

          <Body>
            <PaneColumn>
              <FormPane>
                <Crumbs>
                  <ChevronLeft size={22} strokeWidth={2} />
                  <BackText>返回</BackText>
                  <CrumbSep />
                  商品列表&nbsp;&nbsp;/&nbsp;&nbsp;<CrumbCurrent>新增商品档案</CrumbCurrent>
                </Crumbs>

                <SectionTitle $m="27px 0 23px">进销存属性</SectionTitle>
                <FormGroup>
                  <Row>
                    <Field>
                      <FieldLabel>采购范围</FieldLabel>
                      <InputBox>
                        <Placeholder>请选择采购范围</Placeholder>
                        <ChevronDown size={24} color="#555" />
                      </InputBox>
                    </Field>
                    <PriceInput label="要货模板" placeholder="请选择要货模板" unit="" />
                    <Field>
                      <FieldLabel>仓库位置</FieldLabel>
                      <InputBox>
                        <Placeholder>请输入仓库位置</Placeholder>
                        <Unit $muted>0 / 50</Unit>
                      </InputBox>
                    </Field>
                    <PriceInput label="过期催销天数" placeholder="请输入过期催销天数" unit="天" />
                  </Row>
                  <Row $pl={145} $gap={19.5}>
                    {flagChecks.map((c) => (
                      <CheckLabel key={c.label} on={c.on}>
                        {c.label}
                      </CheckLabel>
                    ))}
                  </Row>
                  <Row>
                    <Field $cell={520}>
                      <FieldLabel>
                        <em>*</em>进货价
                      </FieldLabel>
                      <InputBox>
                        <span>0.00</span>
                        <Unit>元/基本单位</Unit>
                      </InputBox>
                    </Field>
                    <CheckLabel>锁定辅助单位进货价</CheckLabel>
                  </Row>
                  <Row>
                    <Field $cell={520}>
                      <FieldLabel>
                        <em>*</em>配送价
                      </FieldLabel>
                      <InputBox>
                        <span>0.00</span>
                        <Unit>元/基本单位</Unit>
                      </InputBox>
                    </Field>
                    <CheckLabel>锁定配送加点</CheckLabel>
                    <SelectRatio />
                    <InputBox $w={299} $ml={14}>
                      <span>0.00</span>
                      <Unit $muted>%</Unit>
                    </InputBox>
                    <CheckLabel ml={33}>锁定辅助单位配送价</CheckLabel>
                  </Row>
                  <Row>
                    <Field $cell={520}>
                      <FieldLabel>
                        <em>*</em>批发价
                      </FieldLabel>
                      <InputBox>
                        <span>0.00</span>
                        <Unit>元/基本单位</Unit>
                      </InputBox>
                    </Field>
                    <CheckLabel>锁定批发加点</CheckLabel>
                    <SelectRatio />
                    <InputBox $w={299} $ml={14}>
                      <span>0.00</span>
                      <Unit $muted>%</Unit>
                    </InputBox>
                    <CheckLabel ml={33}>锁定辅助单位批发价</CheckLabel>
                  </Row>
                  <Row>
                    <PriceInput label="批发价2" placeholder="请输入批发价2" />
                    <PriceInput label="批发价3" placeholder="请输入批发价3" />
                    <PriceInput label="批发价4" placeholder="请输入批发价4" />
                  </Row>
                </FormGroup>

                <SectionTitle $m="24px 0 0">规格管理</SectionTitle>
                <TableWrap>
                  <TableCol>
                    <HeadRow>
                      {head.map((h, i) => (
                        <HeadCell key={i} $right={h.right} $pr={h.pr}>
                          {h.label}
                        </HeadCell>
                      ))}
                    </HeadRow>
                    <DataRow>
                      <DataCell>
                        <ClippedCode>002</ClippedCode>
                      </DataCell>
                      <DataCell>是</DataCell>
                      {prices.map((p, i) => (
                        <DataCell key={i} $right>
                          {p}
                        </DataCell>
                      ))}
                      {rowChecks.map((on, i) => (
                        <DataCell key={i} $box>
                          <Box $on={on}>{on && <Check size={18} strokeWidth={3.5} />}</Box>
                        </DataCell>
                      ))}
                    </DataRow>
                    <HScrollThumb />
                  </TableCol>
                  <ColumnToggle>
                    <TableIcon />
                    <ColumnLabel>列</ColumnLabel>
                  </ColumnToggle>
                </TableWrap>

                <SectionTitle $m="24px 0 24px">零售属性</SectionTitle>
                <FormGroup>
                  <Row>
                    <RowLabel>销售属性</RowLabel>
                    <CheckLabel on>负库存销售</CheckLabel>
                    <HelpDot>?</HelpDot>
                    <CheckLabel on ml={21}>
                      允许调价
                    </CheckLabel>
                  </Row>
                  <Row>
                    <RowLabel>打印属性</RowLabel>
                    <CheckLabel on>价签打印</CheckLabel>
                    <CheckLabel on ml={19}>
                      标签打印
                    </CheckLabel>
                  </Row>
                  <Row>
                    <PriceInput label="积分值" placeholder="请输入积分值" unit="" w={538} />
                  </Row>
                  <Row>
                    <PriceInput label="最低售价" value="0.00" unit="" w={538} />
                  </Row>
                  <Row>
                    <PriceInput label="" value="" unit="" w={538} />
                  </Row>
                </FormGroup>
                <ScrollThumb />
              </FormPane>
              <Footer>
                <Button>取 消</Button>
                <Button>保存模板</Button>
                <Button $primary>保 存</Button>
                <Button $primary>保存并新增</Button>
                <Button $primary>保存并返回</Button>
              </Footer>
            </PaneColumn>
            <Gutter />
          </Body>
        </Workspace>
      </Main>

      <WatermarkLayer>
        {marks.map((m, i) => (
          <Watermark key={i} style={{ left: m.left, top: m.top }}>
            乐檬糖1706
          </Watermark>
        ))}
      </WatermarkLayer>

      <ArrowLayer width="2560" height="1370">
        {arrows.map((a, i) => (
          <polygon key={i} points={arrowPoints(a)} fill="#f5302e" />
        ))}
      </ArrowLayer>
    </Page>
  )
}
